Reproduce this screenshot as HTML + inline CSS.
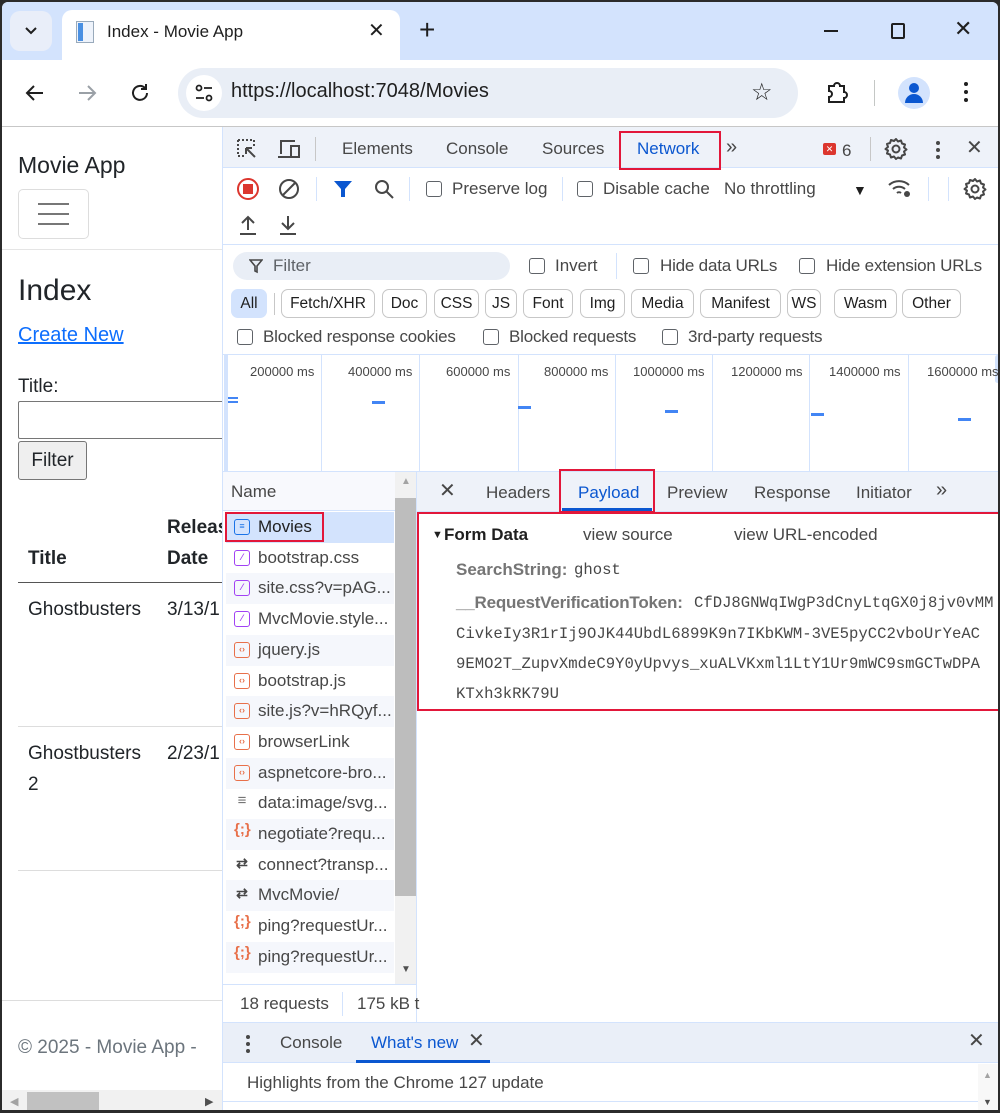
<!DOCTYPE html>
<html><head><meta charset="utf-8"><style>
*{margin:0;padding:0;box-sizing:border-box}
body{width:1000px;height:1113px;position:relative;overflow:hidden;background:#2b2b2b;font-family:"Liberation Sans",sans-serif;color:#1f1f1f}
.a{position:absolute;white-space:nowrap}
.t{position:absolute;white-space:nowrap;font-size:17px;line-height:20px;color:#474747}
.cb{position:absolute;width:16px;height:16px;border:1.5px solid #5f6368;border-radius:3px;background:#fff}
.chip{position:absolute;top:287px;height:29px;border:1px solid #c7c7c7;border-radius:7px;font-size:15.5px;line-height:27px;text-align:center;color:#1f1f1f;background:#fff}
.row{position:absolute;left:224px;width:168px;height:30.7px;font-size:17px;line-height:30px;color:#474747;padding-left:32px}
.row i{position:absolute;left:8px;top:7px;width:16px;height:16px;border:1.5px solid #e8704a;border-radius:3px;font-style:normal;font-size:9px;line-height:12px;text-align:center;color:#e8704a;font-weight:bold}
.row i.p{border-color:#a142f4;color:#a142f4}
.red{position:absolute;border:2.5px solid #e2173a}
.mono{font-family:"Liberation Mono",monospace;font-size:15.6px;color:#474747}
</style></head><body>
<svg width="0" height="0" style="position:absolute"><defs><g id="gear"><path d="M12 2l2 2.5 3-1 1 3 3 1-1 3 2.5 2-2.5 2 1 3-3 1-1 3-3-1L12 22l-2-2.5-3 1-1-3-3-1 1-3L1.5 12 4 10 3 7l3-1 1-3 3 1z" stroke="#474747" stroke-width="2" fill="none" stroke-linejoin="round"/><circle cx="12" cy="12" r="3.5" stroke="#474747" stroke-width="2" fill="none"/></g></defs></svg>
<div class="a" style="left:2px;top:2px;width:996px;height:1108px;background:#fff;border-radius:6px 6px 0 0;overflow:hidden">
<div class="a" style="left:0;top:0;width:996px;height:58px;background:#d3e3fd"></div>
<div class="a" style="left:8px;top:9px;width:42px;height:40px;background:#e9eef9;border-radius:10px"></div>
<svg class="a" style="left:22px;top:24px" width="14" height="10"><path d="M2 2l5 5 5-5" stroke="#1f1f1f" stroke-width="2" fill="none"/></svg>
<div class="a" style="left:60px;top:8px;width:338px;height:52px;background:#fff;border-radius:10px 10px 0 0"></div>
<div class="a" style="left:74px;top:19px;width:18px;height:22px;border:1px solid #9ab;background:#eef3fb"></div>
<div class="a" style="left:76px;top:21px;width:5px;height:18px;background:#4a90e2"></div>
<div class="t" style="left:105px;top:20px;color:#1f1f1f">Index - Movie App</div>
<div class="a" style="left:366px;top:16px;font-size:20px;color:#1f1f1f">✕</div>
<div class="a" style="left:417px;top:12px;font-size:28px;color:#1f1f1f;font-weight:300">+</div>
<div class="a" style="left:822px;top:28px;width:14px;height:2px;background:#1f1f1f"></div>
<div class="a" style="left:889px;top:21px;width:14px;height:16px;border:2px solid #1f1f1f;border-radius:2px"></div>
<div class="a" style="left:952px;top:14px;font-size:22px;color:#1f1f1f">✕</div>
<svg class="a" style="left:22px;top:80px" width="22" height="22"><path d="M19 11H4M10 4l-7 7 7 7" stroke="#1f1f1f" stroke-width="2" fill="none"/></svg>
<svg class="a" style="left:74px;top:80px" width="22" height="22"><path d="M3 11h15M12 4l7 7-7 7" stroke="#9aa0a6" stroke-width="2" fill="none"/></svg>
<svg class="a" style="left:126px;top:79px" width="24" height="24"><path d="M19 12a7 7 0 1 1-2-5" stroke="#1f1f1f" stroke-width="2" fill="none"/><path d="M18 3v5h-5" stroke="#1f1f1f" stroke-width="2" fill="none"/></svg>
<div class="a" style="left:176px;top:66px;width:620px;height:50px;background:#e9eef6;border-radius:25px"></div>
<div class="a" style="left:184px;top:73px;width:36px;height:36px;background:#fff;border-radius:18px"></div>
<svg class="a" style="left:191px;top:80px" width="22" height="22"><circle cx="6" cy="6" r="2.5" stroke="#1f1f1f" stroke-width="1.8" fill="none"/><path d="M11 6h8M3 16h8" stroke="#1f1f1f" stroke-width="1.8"/><circle cx="16" cy="16" r="2.5" stroke="#1f1f1f" stroke-width="1.8" fill="none"/></svg>
<div class="a" style="left:229px;top:78px;font-size:20px;color:#1f1f1f">https://localhost:7048/Movies</div>
<div class="a" style="left:749px;top:76px;font-size:24px;color:#1f1f1f">☆</div>
<svg class="a" style="left:822px;top:78px" width="26" height="26"><path d="M5 6h5a3 3 0 0 1 6 0h4v6a3 3 0 0 1 0 6v4H5v-5a3 3 0 0 0 0-6z" stroke="#1f1f1f" stroke-width="2" fill="none"/></svg>
<div class="a" style="left:872px;top:78px;width:1px;height:26px;background:#c4c7c5"></div>
<div class="a" style="left:896px;top:75px;width:32px;height:32px;border-radius:16px;background:#d3e3fd"></div>
<div class="a" style="left:907px;top:81px;width:10px;height:10px;border-radius:5px;background:#0b57d0"></div>
<div class="a" style="left:903px;top:92px;width:18px;height:9px;border-radius:9px 9px 0 0;background:#0b57d0"></div>
<div class="a" style="left:962px;top:80px;width:4px;height:4px;border-radius:2px;background:#1f1f1f;box-shadow:0 8px 0 #1f1f1f,0 16px 0 #1f1f1f"></div>
<div class="a" style="left:0;top:124px;width:996px;height:1px;background:#c7c7c7"></div>

<div class="a" style="left:16px;top:150px;font-size:23px;color:#212529">Movie App</div>
<div class="a" style="left:16px;top:187px;width:71px;height:50px;border:1px solid #ddd;border-radius:5px"></div>
<div class="a" style="left:36px;top:201px;width:31px;height:2px;background:#777;box-shadow:0 10px 0 #777,0 20px 0 #777"></div>
<div class="a" style="left:0;top:247px;width:220px;height:1px;background:#e5e5e5"></div>
<div class="a" style="left:16px;top:272px;font-size:30px;color:#212529">Index</div>
<div class="a" style="left:16px;top:322px;font-size:20px;color:#0d6efd;text-decoration:underline">Create New</div>
<div class="a" style="left:16px;top:374px;font-size:19px;color:#212529">Title:</div>
<div class="a" style="left:16px;top:399px;width:210px;height:38px;border:1px solid #767676;border-radius:2px"></div>
<div class="a" style="left:16px;top:439px;width:69px;height:39px;border:1px solid #767676;border-radius:3px;background:#efefef;font-size:19px;line-height:37px;text-align:center;color:#212529">Filter</div>
<div class="a" style="left:165px;top:515px;font-size:19px;font-weight:bold;color:#212529">Releas</div>
<div class="a" style="left:26px;top:546px;font-size:19px;font-weight:bold;color:#212529">Title</div>
<div class="a" style="left:165px;top:546px;font-size:19px;font-weight:bold;color:#212529">Date</div>
<div class="a" style="left:16px;top:580px;width:206px;height:1px;background:#555"></div>
<div class="a" style="left:26px;top:597px;font-size:19px;color:#212529">Ghostbusters</div>
<div class="a" style="left:165px;top:597px;font-size:19px;color:#212529">3/13/1</div>
<div class="a" style="left:16px;top:724px;width:206px;height:1px;background:#ddd"></div>
<div class="a" style="left:26px;top:741px;font-size:19px;color:#212529">Ghostbusters</div>
<div class="a" style="left:165px;top:741px;font-size:19px;color:#212529">2/23/1</div>
<div class="a" style="left:26px;top:772px;font-size:19px;color:#212529">2</div>
<div class="a" style="left:16px;top:868px;width:206px;height:1px;background:#ddd"></div>
<div class="a" style="left:0;top:998px;width:220px;height:1px;background:#ddd"></div>
<div class="a" style="left:16px;top:1035px;font-size:19px;color:#6c757d">© 2025  - Movie App -</div>
<div class="a" style="left:0;top:1088px;width:220px;height:20px;background:#f1f1f1"></div>
<div class="a" style="left:25px;top:1090px;width:72px;height:18px;background:#c1c1c1"></div>
<div class="a" style="left:8px;top:1093px;font-size:11px;color:#a3a3a3">◀</div>
<div class="a" style="left:203px;top:1093px;font-size:11px;color:#505050">▶</div>

<div class="a" style="left:220px;top:125px;width:776px;height:983px;background:#fff;border-left:1px solid #d3e3fd"></div>
<div class="a" style="left:221px;top:125px;width:775px;height:41px;background:#eef2f9;border-bottom:1px solid #d3e3fd"></div>
<svg class="a" style="left:234px;top:136px" width="24" height="24"><path d="M2 2h16v6M2 2v16h6" stroke="#474747" stroke-width="2" stroke-dasharray="2 2" fill="none"/><path d="M10 10l9 9M10 10h6M10 10v6" stroke="#474747" stroke-width="2" fill="none"/></svg>
<svg class="a" style="left:274px;top:136px" width="26" height="22"><path d="M5 16V3h14M2 19h12" stroke="#474747" stroke-width="2" fill="none"/><rect x="15" y="8" width="8" height="11" stroke="#474747" stroke-width="2" fill="none"/></svg>
<div class="a" style="left:313px;top:135px;width:1px;height:24px;background:#c7c7c7"></div>
<div class="t" style="left:340px;top:137px">Elements</div>
<div class="t" style="left:444px;top:137px">Console</div>
<div class="t" style="left:540px;top:137px">Sources</div>
<div class="t" style="left:635px;top:137px;color:#0b57d0">Network</div>
<div class="red" style="left:617px;top:129px;width:102px;height:39px"></div>
<div class="t" style="left:724px;top:135px;font-size:20px">»</div>
<div class="a" style="left:821px;top:141px;width:13px;height:12px;background:#dc362e;border-radius:2px;color:#fff;font-size:9px;line-height:12px;text-align:center">✕</div>
<div class="t" style="left:840px;top:139px">6</div>
<div class="a" style="left:868px;top:135px;width:1px;height:24px;background:#c7c7c7"></div>
<svg class="a" style="left:882px;top:135px" width="24" height="24"><use href="#gear"/></svg>
<div class="a" style="left:934px;top:139px;width:3.5px;height:3.5px;border-radius:2px;background:#474747;box-shadow:0 7px 0 #474747,0 14px 0 #474747"></div>
<div class="t" style="left:964px;top:136px;font-size:20px">✕</div>
<div class="a" style="left:235px;top:176px;width:22px;height:22px;border:2px solid #dc362e;border-radius:11px"></div>
<div class="a" style="left:241px;top:182px;width:10px;height:10px;background:#dc362e"></div>
<svg class="a" style="left:276px;top:176px" width="22" height="22"><circle cx="11" cy="11" r="9" stroke="#474747" stroke-width="2" fill="none"/><path d="M5 17L17 5" stroke="#474747" stroke-width="2"/></svg>
<div class="a" style="left:314px;top:175px;width:1px;height:24px;background:#d3e3fd"></div>
<svg class="a" style="left:331px;top:177px" width="20" height="20"><path d="M1 2h18l-7 8v8h-4v-8z" fill="#0b57d0"/></svg>
<svg class="a" style="left:371px;top:176px" width="22" height="22"><circle cx="9" cy="9" r="6" stroke="#474747" stroke-width="2" fill="none"/><path d="M13.5 13.5L20 20" stroke="#474747" stroke-width="2"/></svg>
<div class="a" style="left:407px;top:175px;width:1px;height:24px;background:#d3e3fd"></div>
<div class="cb" style="left:424px;top:179px"></div><div class="t" style="left:450px;top:177px">Preserve log</div>
<div class="a" style="left:560px;top:175px;width:1px;height:24px;background:#d3e3fd"></div>
<div class="cb" style="left:575px;top:179px"></div><div class="t" style="left:601px;top:177px">Disable cache</div>
<div class="t" style="left:722px;top:177px">No throttling</div>
<div class="t" style="left:851px;top:178px;font-size:14px;color:#1f1f1f">▼</div>
<svg class="a" style="left:885px;top:175px" width="26" height="22"><path d="M2 8a15 15 0 0 1 20 0M6 12a9 9 0 0 1 12 0M10 16a3 3 0 0 1 4 0" stroke="#474747" stroke-width="2" fill="none"/><circle cx="20" cy="17" r="3" fill="#474747"/></svg>
<div class="a" style="left:926px;top:175px;width:1px;height:24px;background:#d3e3fd"></div>
<div class="a" style="left:946px;top:175px;width:1px;height:24px;background:#d3e3fd"></div>
<svg class="a" style="left:961px;top:175px" width="24" height="24"><use href="#gear"/></svg>
<svg class="a" style="left:236px;top:212px" width="20" height="22"><path d="M10 16V3M4 9l6-6 6 6M2 20h16" stroke="#474747" stroke-width="2" fill="none"/></svg>
<svg class="a" style="left:276px;top:212px" width="20" height="22"><path d="M10 2v13M4 9l6 6 6-6M2 20h16" stroke="#474747" stroke-width="2" fill="none"/></svg>
<div class="a" style="left:221px;top:242px;width:775px;height:1px;background:#d3e3fd"></div>
<div class="a" style="left:231px;top:250px;width:277px;height:28px;background:#e9eef6;border-radius:14px"></div>
<svg class="a" style="left:247px;top:256px" width="14" height="16"><path d="M1 2h12l-5 6v6l-2-1V8z" stroke="#474747" stroke-width="1.6" fill="none"/></svg>
<div class="t" style="left:271px;top:254px;color:#5f6368">Filter</div>
<div class="cb" style="left:527px;top:256px"></div><div class="t" style="left:553px;top:254px">Invert</div>
<div class="a" style="left:614px;top:251px;width:1px;height:26px;background:#d3e3fd"></div>
<div class="cb" style="left:631px;top:256px"></div><div class="t" style="left:658px;top:254px;letter-spacing:-0.2px">Hide data URLs</div>
<div class="cb" style="left:797px;top:256px"></div><div class="t" style="left:824px;top:254px;letter-spacing:-0.2px">Hide extension URLs</div>
<div class="chip" style="left:229px;width:36px;border-color:#d3e3fd;background:#d3e3fd">All</div>
<div class="a" style="left:272px;top:291px;width:1px;height:22px;background:#c7c7c7"></div>
<div class="chip" style="left:279px;width:94px">Fetch/XHR</div>
<div class="chip" style="left:380px;width:45px">Doc</div>
<div class="chip" style="left:432px;width:45px">CSS</div>
<div class="chip" style="left:483px;width:32px">JS</div>
<div class="chip" style="left:521px;width:50px">Font</div>
<div class="chip" style="left:578px;width:45px">Img</div>
<div class="chip" style="left:629px;width:63px">Media</div>
<div class="chip" style="left:698px;width:81px">Manifest</div>
<div class="chip" style="left:785px;width:34px">WS</div>
<div class="chip" style="left:832px;width:63px">Wasm</div>
<div class="chip" style="left:900px;width:59px">Other</div>
<div class="cb" style="left:235px;top:327px"></div><div class="t" style="left:261px;top:325px;letter-spacing:-0.2px">Blocked response cookies</div>
<div class="cb" style="left:481px;top:327px"></div><div class="t" style="left:507px;top:325px;letter-spacing:-0.2px">Blocked requests</div>
<div class="cb" style="left:660px;top:327px"></div><div class="t" style="left:686px;top:325px;letter-spacing:-0.2px">3rd-party requests</div>
<div class="a" style="left:221px;top:352px;width:775px;height:1px;background:#d3e3fd"></div>
<div class="a" style="left:319px;top:353px;width:1px;height:117px;background:#d3e3fd"></div>
<div class="a" style="left:417px;top:353px;width:1px;height:117px;background:#d3e3fd"></div>
<div class="a" style="left:516px;top:353px;width:1px;height:117px;background:#d3e3fd"></div>
<div class="a" style="left:613px;top:353px;width:1px;height:117px;background:#d3e3fd"></div>
<div class="a" style="left:710px;top:353px;width:1px;height:117px;background:#d3e3fd"></div>
<div class="a" style="left:807px;top:353px;width:1px;height:117px;background:#d3e3fd"></div>
<div class="a" style="left:906px;top:353px;width:1px;height:117px;background:#d3e3fd"></div>
<div class="a" style="left:222px;top:353px;width:4px;height:117px;background:#d3e3fd"></div>
<div class="a" style="left:993px;top:353px;width:5px;height:28px;background:#d3e3fd;border-radius:3px"></div>
<div class="a" style="left:248px;top:362px;font-size:13px;color:#474747">200000 ms</div>
<div class="a" style="left:346px;top:362px;font-size:13px;color:#474747">400000 ms</div>
<div class="a" style="left:444px;top:362px;font-size:13px;color:#474747">600000 ms</div>
<div class="a" style="left:542px;top:362px;font-size:13px;color:#474747">800000 ms</div>
<div class="a" style="left:631px;top:362px;font-size:13px;color:#474747">1000000 ms</div>
<div class="a" style="left:729px;top:362px;font-size:13px;color:#474747">1200000 ms</div>
<div class="a" style="left:827px;top:362px;font-size:13px;color:#474747">1400000 ms</div>
<div class="a" style="left:925px;top:362px;font-size:13px;color:#474747">1600000 ms</div>
<div class="a" style="left:226px;top:395px;width:10px;height:2px;background:#4285f4;box-shadow:0 4px 0 #4285f4"></div>
<div class="a" style="left:370px;top:399px;width:13px;height:3px;background:#4285f4"></div>
<div class="a" style="left:516px;top:404px;width:13px;height:3px;background:#4285f4"></div>
<div class="a" style="left:663px;top:408px;width:13px;height:3px;background:#4285f4"></div>
<div class="a" style="left:809px;top:411px;width:13px;height:3px;background:#4285f4"></div>
<div class="a" style="left:956px;top:416px;width:13px;height:3px;background:#4285f4"></div>
<div class="a" style="left:221px;top:469px;width:775px;height:1px;background:#d3e3fd"></div>
<div class="a" style="left:221px;top:470px;width:172px;height:39px;background:#f8f9fd;border-bottom:1px solid #d3e3fd"></div>
<div class="t" style="left:229px;top:480px">Name</div>
<div class="a" style="left:393px;top:470px;width:21px;height:515px;background:#f1f1f1"></div>
<div class="a" style="left:393px;top:496px;width:21px;height:398px;background:#bdbdbd"></div>
<div class="a" style="left:399px;top:474px;font-size:10px;color:#a3a3a3">▲</div>
<div class="a" style="left:399px;top:962px;font-size:10px;color:#505050">▼</div>
<div class="a" style="left:414px;top:470px;width:1px;height:550px;background:#d3e3fd"></div>

<div class="row" style="top:510px;background:#d3e3fd;color:#1f1f1f"><i style="border-color:#1a73e8;color:#1a73e8">≡</i>Movies</div>
<div class="red" style="left:223px;top:510px;width:99px;height:30px"></div>
<div class="row" style="top:541px"><i class="p">⁄</i>bootstrap.css</div>
<div class="row" style="top:571px;background:#f5f7fc"><i class="p">⁄</i>site.css?v=pAG...</div>
<div class="row" style="top:602px"><i class="p">⁄</i>MvcMovie.style...</div>
<div class="row" style="top:633px;background:#f5f7fc"><i>‹›</i>jquery.js</div>
<div class="row" style="top:664px"><i>‹›</i>bootstrap.js</div>
<div class="row" style="top:694px;background:#f5f7fc"><i>‹›</i>site.js?v=hRQyf...</div>
<div class="row" style="top:725px"><i>‹›</i>browserLink</div>
<div class="row" style="top:756px;background:#f5f7fc"><i>‹›</i>aspnetcore-bro...</div>
<div class="row" style="top:786px"><i style="border:none;color:#757575;font-size:15px">≡</i>data:image/svg...</div>
<div class="row" style="top:817px;background:#f5f7fc"><i style="border:none;font-size:15px;top:5px">{;}</i>negotiate?requ...</div>
<div class="row" style="top:848px"><i style="border:none;color:#474747;font-size:14px">⇄</i>connect?transp...</div>
<div class="row" style="top:878px;background:#f5f7fc"><i style="border:none;color:#474747;font-size:14px">⇄</i>MvcMovie/</div>
<div class="row" style="top:909px"><i style="border:none;font-size:15px;top:5px">{;}</i>ping?requestUr...</div>
<div class="row" style="top:940px;background:#f5f7fc"><i style="border:none;font-size:15px;top:5px">{;}</i>ping?requestUr...</div>
<div class="a" style="left:221px;top:982px;width:193px;height:38px;background:#fff;border-top:1px solid #d3e3fd"></div>
<div class="t" style="left:238px;top:992px">18 requests</div>
<div class="a" style="left:340px;top:990px;width:1px;height:24px;background:#d3e3fd"></div>
<div class="t" style="left:355px;top:992px">175 kB t</div>
<div class="a" style="left:415px;top:470px;width:581px;height:40px;background:#eef2f9;border-bottom:1px solid #d3e3fd"></div>
<div class="t" style="left:437px;top:479px;font-size:20px">✕</div>
<div class="t" style="left:484px;top:481px">Headers</div>
<div class="t" style="left:576px;top:481px;color:#0b57d0">Payload</div>
<div class="a" style="left:560px;top:506px;width:90px;height:3px;background:#0b57d0"></div>
<div class="red" style="left:557px;top:467px;width:96px;height:44px"></div>
<div class="t" style="left:665px;top:481px">Preview</div>
<div class="t" style="left:752px;top:481px">Response</div>
<div class="t" style="left:854px;top:481px">Initiator</div>
<div class="t" style="left:934px;top:478px;font-size:20px">»</div>
<div class="red" style="left:415px;top:510px;width:583px;height:199px"></div>
<div class="a" style="left:430px;top:527px;font-size:11px;color:#1f1f1f">▼</div>
<div class="t" style="left:442px;top:523px;font-weight:bold;color:#1f1f1f">Form Data</div>
<div class="t" style="left:581px;top:523px">view source</div>
<div class="t" style="left:732px;top:523px">view URL-encoded</div>
<div class="t" style="left:454px;top:558px;font-weight:bold;color:#757575">SearchString:</div>
<div class="a mono" style="left:572px;top:559px">ghost</div>
<div class="t" style="left:454px;top:591px;font-weight:bold;color:#757575;letter-spacing:-0.2px">__RequestVerificationToken:</div>
<div class="a mono" style="left:692px;top:592px;width:302px;overflow:hidden">CfDJ8GNWqIWgP3dCnyLtqGX0j8jv0vMM</div>
<div class="a mono" style="left:454px;top:623px;width:540px;overflow:hidden">CivkeIy3R1rIj9OJK44UbdL6899K9n7IKbKWM-3VE5pyCC2vboUrYeAC</div>
<div class="a mono" style="left:454px;top:653px;width:540px;overflow:hidden">9EMO2T_ZupvXmdeC9Y0yUpvys_xuALVKxml1LtY1Ur9mWC9smGCTwDPA</div>
<div class="a mono" style="left:454px;top:683px">KTxh3kRK79U</div>
<div class="a" style="left:221px;top:1020px;width:775px;height:41px;background:#eaeff8;border-top:1px solid #d3e3fd;border-bottom:1px solid #d3e3fd"></div>
<div class="a" style="left:244px;top:1033px;width:3.5px;height:3.5px;border-radius:2px;background:#474747;box-shadow:0 7px 0 #474747,0 14px 0 #474747"></div>
<div class="t" style="left:278px;top:1031px">Console</div>
<div class="t" style="left:369px;top:1031px;color:#0b57d0">What's new</div>
<div class="t" style="left:466px;top:1029px;font-size:20px">✕</div>
<div class="a" style="left:354px;top:1058px;width:134px;height:3px;background:#0b57d0"></div>
<div class="t" style="left:966px;top:1029px;font-size:20px">✕</div>
<div class="t" style="left:245px;top:1071px">Highlights from the Chrome 127 update</div>
<div class="a" style="left:221px;top:1099px;width:755px;height:1px;background:#d3e3fd"></div>
<div class="a" style="left:976px;top:1062px;width:20px;height:46px;background:#f8f8f8"></div>
<div class="a" style="left:981px;top:1068px;font-size:9px;color:#a3a3a3">▲</div>
<div class="a" style="left:981px;top:1095px;font-size:9px;color:#505050">▼</div>
</div>
</body></html>
